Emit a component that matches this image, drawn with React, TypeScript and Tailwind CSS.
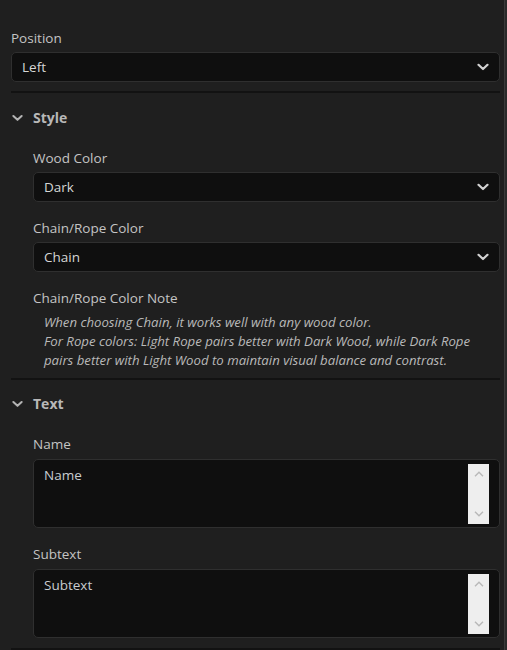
import React from "react";

const font = { fontFamily: '"Open Sans", "Noto Sans", sans-serif' };

function Chevron({ className }: { className?: string }) {
  return (
    <svg viewBox="0 0 12 8" className={className} fill="none" stroke="currentColor" strokeWidth="2.2" strokeLinecap="round" strokeLinejoin="round">
      <path d="M1.5 1.8 L6 6 L10.5 1.8" />
    </svg>
  );
}

function Select({ value }: { value: string }) {
  return (
    <div className="flex h-[30px] items-center justify-between rounded-[5px] border border-[#2f2f2f] bg-[#0f0f0f] pl-[10px] pr-[10px]">
      <span className="text-[13.5px] text-[#d6d6d6]">{value}</span>
      <Chevron className="h-[8px] w-[12px] text-[#d2d2d2]" />
    </div>
  );
}

function Label({ children }: { children: React.ReactNode }) {
  return <div className="h-[20px] text-[13.5px] leading-[20px] text-[#c4c4c4]">{children}</div>;
}

function Header({ children }: { children: React.ReactNode }) {
  return (
    <div className="flex h-[20px] items-center">
      <Chevron className="ml-[1px] h-[8px] w-[11px] text-[#b4b4b4]" />
      <span className="ml-[10px] text-[14px] font-bold leading-[20px] text-[#b8b8b8]">{children}</span>
    </div>
  );
}

function TextArea({ value }: { value: string }) {
  return (
    <div className="flex h-[69px] rounded-[5px] border border-[#2f2f2f] bg-[#0f0f0f]">
      <div className="flex-1 pl-[10px] pt-[5px] text-[13.5px] leading-[20px] text-[#c8ccd0]">{value}</div>
      <div className="mb-[3px] mr-[10px] mt-[4px] flex w-[21px] flex-col items-center justify-between bg-[#eeeeee] py-[7px]">
        <svg viewBox="0 0 10 6" className="h-[6px] w-[10px]" fill="none" stroke="#b8b8b8" strokeWidth="1.4">
          <path d="M1 5.2 L5 1.2 L9 5.2" />
        </svg>
        <svg viewBox="0 0 10 6" className="h-[6px] w-[10px]" fill="none" stroke="#b8b8b8" strokeWidth="1.4">
          <path d="M1 0.8 L5 4.8 L9 0.8" />
        </svg>
      </div>
    </div>
  );
}

export default function App() {
  return (
    <div className="flex h-[650px] w-[507px] overflow-hidden bg-[#1f1f1f]" style={font}>
      <div className="flex-1 pl-[11px] pr-[4px] pt-[28px]">
        <Label>Position</Label>
        <div className="mt-[4px]">
          <Select value="Left" />
        </div>
        <div className="mt-[9px] h-[2px] bg-[#121212]" />
        <div className="mt-[15px]">
          <Header>Style</Header>
        </div>
        <div className="pl-[22px]">
          <div className="mt-[20px]">
            <Label>Wood Color</Label>
          </div>
          <div className="mt-[4px]">
            <Select value="Dark" />
          </div>
          <div className="mt-[16px]">
            <Label>Chain/Rope Color</Label>
          </div>
          <div className="mt-[4px]">
            <Select value="Chain" />
          </div>
          <div className="mt-[16px]">
            <Label>Chain/Rope Color Note</Label>
          </div>
          <div className="mt-[5px] pl-[11px] text-[13.2px] italic leading-[19px] text-[#b9b9b9]">
            When choosing Chain, it works well with any wood color.
            <br />
            For Rope colors: Light Rope pairs better with Dark Wood, while Dark Rope
            <br />
            pairs better with Light Wood to maintain visual balance and contrast.
          </div>
        </div>
        <div className="mt-[8px] h-[2px] bg-[#121212]" />
        <div className="mt-[14px]">
          <Header>Text</Header>
        </div>
        <div className="pl-[22px]">
          <div className="mt-[20px]">
            <Label>Name</Label>
          </div>
          <div className="mt-[5px]">
            <TextArea value="Name" />
          </div>
          <div className="mt-[16px]">
            <Label>Subtext</Label>
          </div>
          <div className="mt-[5px]">
            <TextArea value="Subtext" />
          </div>
        </div>
        <div className="mt-[10px] h-[2px] bg-[#121212]" />
      </div>
      <div className="w-[1px] bg-[#3a3a3a]" />
      <div className="w-[2px] bg-[#2a2a2a]" />
    </div>
  );
}
